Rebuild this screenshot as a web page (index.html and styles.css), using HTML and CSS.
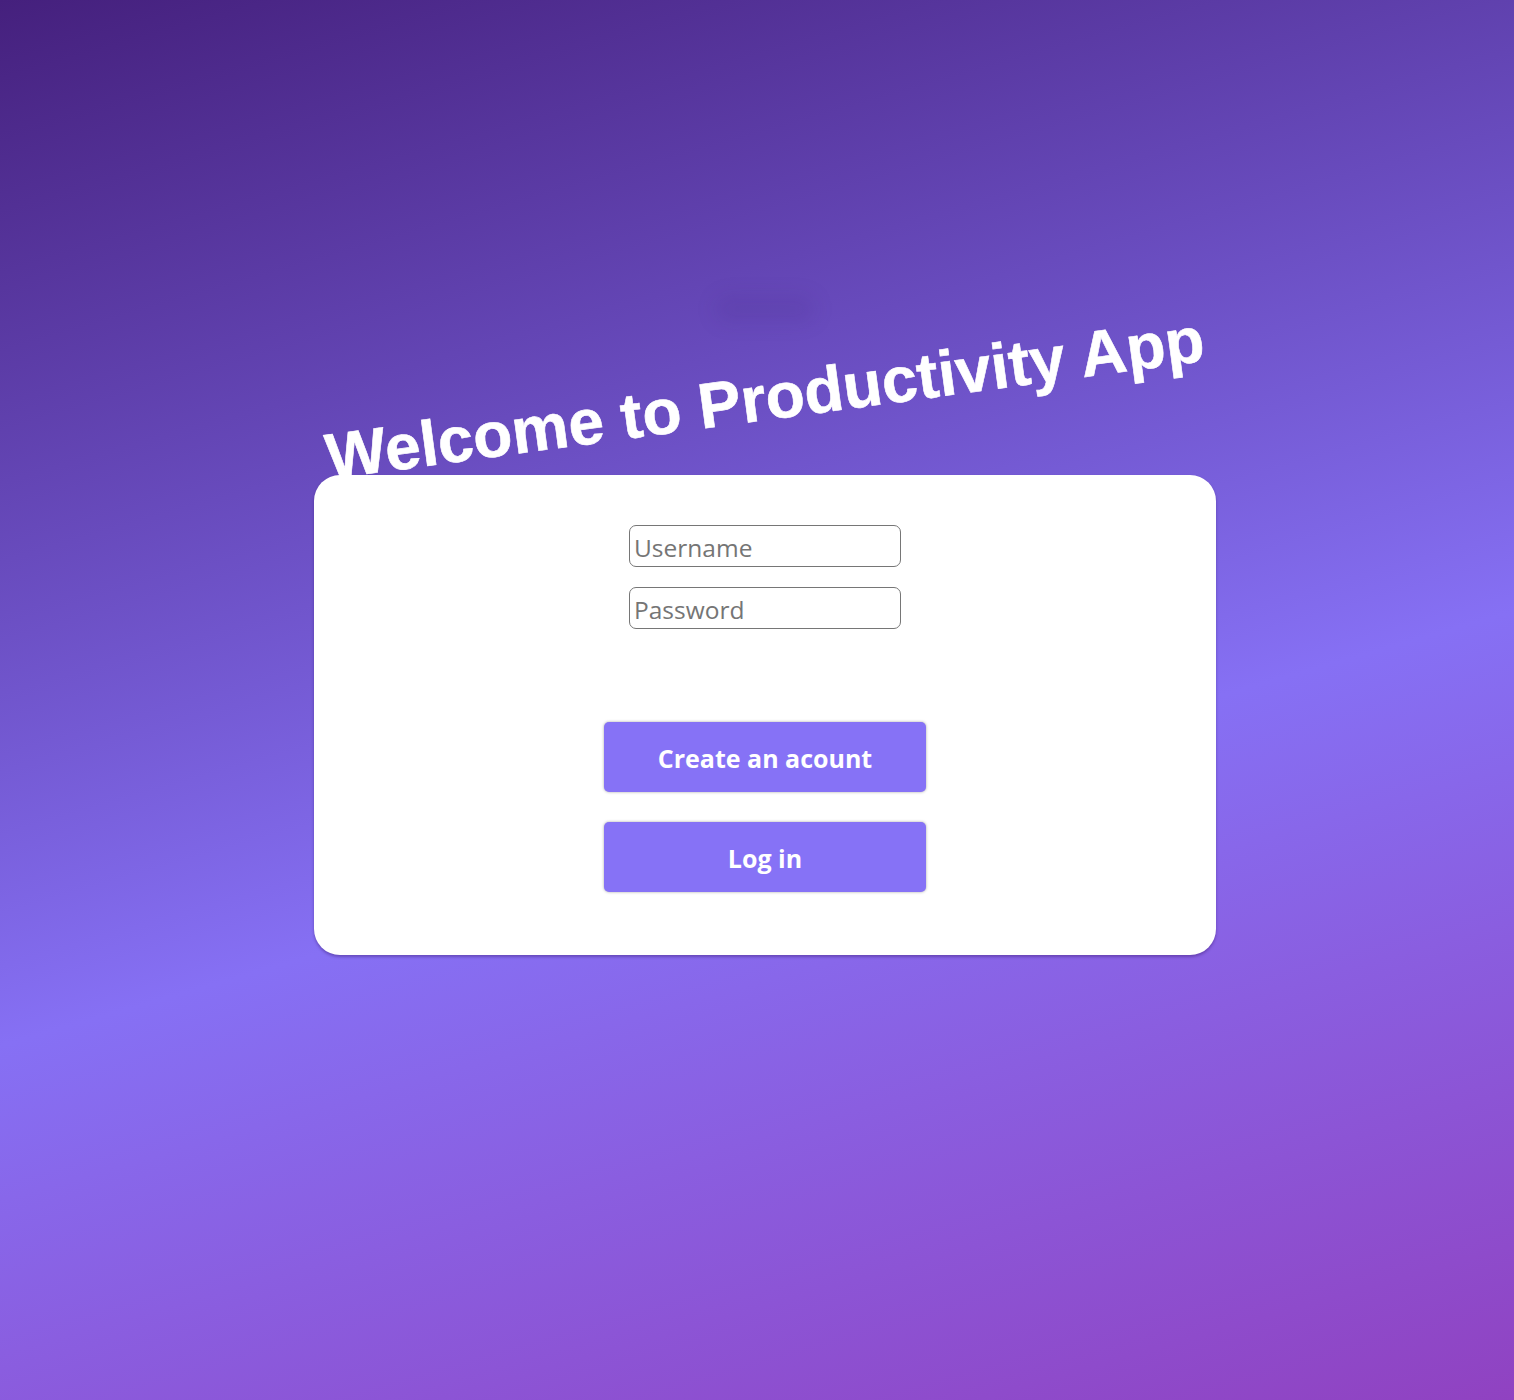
FILE: index.html
```html
<!DOCTYPE html>
<html lang="en">
<head>
<meta charset="utf-8">
<title>Productivity App</title>
<link rel="stylesheet" href="styles.css">
</head>
<body>
<main class="page">
  <div class="glow"></div>
  <h1 class="title">Welcome to Productivity App</h1>
  <section class="card">
    <form class="form">
      <input class="field" type="text" placeholder="Username">
      <input class="field field-gap" type="password" placeholder="Password">
      <button class="btn btn-first" type="button">Create an acount</button>
      <button class="btn btn-next" type="button">Log in</button>
    </form>
  </section>
</main>
</body>
</html>
```

FILE: styles.css
```css
html, body {
  margin: 0;
  padding: 0;
}

body {
  min-height: 1400px;
  background: linear-gradient(164deg, #45207d 0%, #8670f4 57%, #9042c1 100%);
  font-family: "Open Sans", "Noto Sans", sans-serif;
}

.page {
  display: flex;
  flex-direction: column;
  align-items: center;
  padding: 296px 0 0 16px;
}

.glow {
  width: 100px;
  height: 26px;
  border-radius: 14px;
  background: rgba(50, 20, 110, 0.10);
  filter: blur(10px);
}

.title {
  margin: 40px 0 41px;
  font-family: "Liberation Sans", Arial, sans-serif;
  font-weight: 700;
  font-size: 64px;
  line-height: 72px;
  color: #ffffff;
  -webkit-text-stroke: 0.6px #ffffff;
  white-space: nowrap;
  transform: rotate(-7.7deg);
}

.card {
  width: 902px;
  box-sizing: border-box;
  background: #ffffff;
  border-radius: 26px;
  box-shadow: 0 2px 3px rgba(40, 10, 90, 0.35);
  padding: 50px 0 63px;
}

.form {
  display: flex;
  flex-direction: column;
  align-items: center;
}

.field {
  width: 272px;
  height: 42px;
  box-sizing: border-box;
  border: 1px solid #767676;
  border-radius: 7px;
  padding: 2px 4px 0;
  font-family: "Open Sans", "Noto Sans", sans-serif;
  font-size: 24.5px;
  color: #333333;
  background: #ffffff;
  outline: none;
}

.field::placeholder {
  color: #757575;
}

.field-gap {
  margin-top: 20px;
}

.btn {
  width: 322px;
  height: 70px;
  box-sizing: border-box;
  border: none;
  border-radius: 5px;
  background: #8672f6;
  color: #ffffff;
  font-family: "Open Sans", "Noto Sans", sans-serif;
  font-weight: 700;
  font-size: 25px;
  padding: 2px 0 0;
  box-shadow: 0 0 3px rgba(0, 0, 0, 0.35);
  cursor: pointer;
}

.btn-first {
  margin-top: 93px;
}

.btn-next {
  margin-top: 30px;
}
```
